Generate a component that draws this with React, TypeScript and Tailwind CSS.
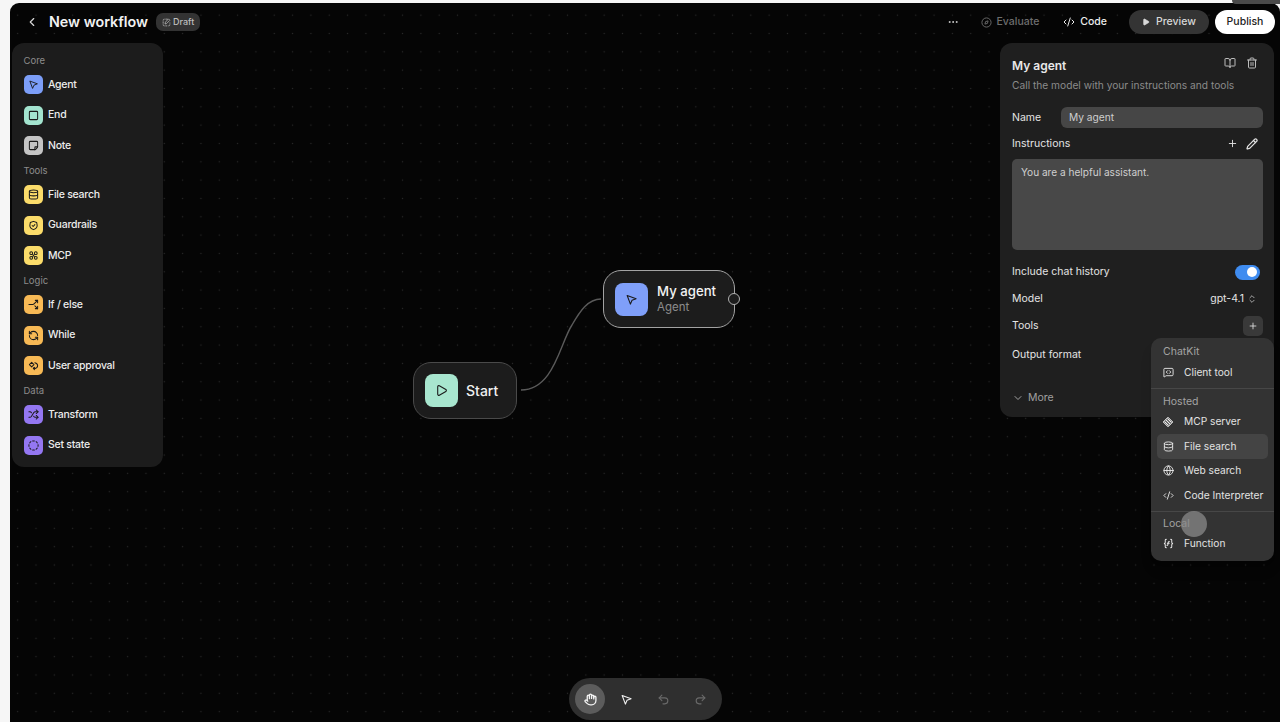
import type { ReactNode } from "react"
import {
  BookOpen,
  ChevronDown,
  ChevronLeft,
  ChevronsUpDown,
  CircleDashed,
  CodeXml,
  Database,
  Ellipsis,
  Globe,
  Hand,
  MessageSquareCode,
  Pencil,
  Play,
  Plus,
  Redo2,
  RefreshCcw,
  Shuffle,
  Split,
  Square,
  StickyNote,
  Trash2,
  Undo2,
} from "lucide-react"

const font = "font-['Inter','Noto_Sans',sans-serif]"

function Cursor({ className }: { className?: string }) {
  return (
    <svg viewBox="0 0 24 24" fill="none" stroke="currentColor" strokeWidth="2" strokeLinejoin="round" className={className}>
      <path d="M4 4.5 20.5 10.5 13 13.5 10 20.5Z" />
    </svg>
  )
}

function ShieldBadge({ className }: { className?: string }) {
  return (
    <svg viewBox="0 0 24 24" fill="none" stroke="currentColor" strokeWidth="2.2" strokeLinecap="round" strokeLinejoin="round" className={className}>
      <path d="M12 3 19 5.5 20 12c0 4-3.5 7.5-8 9-4.5-1.5-8-5-8-9l1-6.5Z" />
      <path d="m9 12 2.2 2.2L15 10" />
    </svg>
  )
}

function McpGlyph({ className }: { className?: string }) {
  return (
    <svg viewBox="0 0 24 24" fill="none" stroke="currentColor" strokeWidth="2.2" className={className}>
      <circle cx="7" cy="7" r="3" />
      <circle cx="17" cy="7" r="3" />
      <circle cx="7" cy="17" r="3" />
      <circle cx="17" cy="17" r="3" />
      <path d="M9.5 9.5l5 5M14.5 9.5l-5 5" />
    </svg>
  )
}

function ApprovalGlyph({ className }: { className?: string }) {
  return (
    <svg viewBox="0 0 24 24" fill="none" stroke="currentColor" strokeWidth="2.2" strokeLinecap="round" strokeLinejoin="round" className={className}>
      <path d="M8 5 13 10 8 15 3 10Z" />
      <path d="M15 6c3.5 1 6 3.500 6 6.500S18 18 15 19l-3-1" />
      <path d="m14 21-2.500-3 3-2" />
    </svg>
  )
}

function McpServerGlyph({ className }: { className?: string }) {
  return (
    <svg viewBox="0 0 24 24" fill="none" stroke="currentColor" strokeWidth="2" strokeLinejoin="round" className={className}>
      <path d="M12 2.500 21.500 12 12 21.500 2.500 12Z" fill="currentColor" fillOpacity="0.35" />
      <path d="M7.500 7.500 16.500 16.500M11 5l8 8M5 11l8 8" />
    </svg>
  )
}

function EvalGlyph({ className }: { className?: string }) {
  return (
    <svg viewBox="0 0 24 24" fill="none" stroke="currentColor" strokeWidth="2" strokeLinejoin="round" className={className}>
      <circle cx="12" cy="12" r="10" />
      <path d="M15.500 8.500 14 14l-5.500 1.500L10 10Z" />
    </svg>
  )
}

function FunctionGlyph({ className }: { className?: string }) {
  return (
    <svg viewBox="0 0 24 24" fill="none" stroke="currentColor" strokeWidth="2.2" strokeLinecap="round" strokeLinejoin="round" className={className}>
      <path d="M7 3C4 3 5 6 5 8.500S3 12 3 12s2 1 2 3.500S4 21 7 21" />
      <path d="M17 3c3 0 2 3 2 5.500s2 3.500 2 3.500-2 1-2 3.500.999 5.500-2 5.500" />
      <path d="M14 8c-2-.5-2.500.5-2.700 2l-.6 4c-.2 1.500-.7 2.500-2.200 2M9.500 11.500h4" />
    </svg>
  )
}

function DraftGlyph({ className }: { className?: string }) {
  return (
    <svg viewBox="0 0 24 24" fill="none" stroke="currentColor" strokeWidth="2" strokeLinecap="round" strokeLinejoin="round" className={className}>
      <path d="M10 3h4M3 10v4M3 6c0-2 1-3 3-3M6 21c-2 0-3-1-3-3M10 21h3M21 13v1M21 18c0 2-1 3-3 3" />
      <path d="M18 3l3 3-9 9-4 1 1-4Z" />
    </svg>
  )
}

function Group({ label, children }: { label: string; children: ReactNode }) {
  return (
    <div>
      <div className="flex h-[18.5px] items-center pt-px text-[9.5px] text-[#8c8c8c]">{label}</div>
      {children}
    </div>
  )
}

function Tool({ color, icon, label }: { color: string; icon: ReactNode; label: string }) {
  return (
    <div className="flex h-[30.5px] items-center gap-[5.5px] text-[10.5px] font-medium tracking-[-0.25px] text-[#ececec]">
      <span className={`flex h-[19px] w-[19px] items-center justify-center rounded-[5px] text-[#1a1a1a] ${color}`}>{icon}</span>
      {label}
    </div>
  )
}

function MenuItem({ icon, label, active }: { icon: ReactNode; label: string; active?: boolean }) {
  return (
    <div className={`mx-[6px] flex h-[24.5px] items-center gap-[10px] rounded-[5px] pl-[5px] text-[10.2px] text-[#e2e2e2] ${active ? "bg-[#444444]" : ""}`}>
      <span className="flex w-[12px] justify-center text-[#e8e8e8]">{icon}</span>
      {label}
    </div>
  )
}

export default function App() {
  const icon = "h-[11px] w-[11px]"
  return (
    <div className={`${font} h-[722px] w-[1280px] overflow-hidden bg-[#f6f6f6] pl-[10px] pt-[3px]`}>
      <div className="relative flex h-[719px] w-[1270px] flex-col rounded-tl-[9px] rounded-tr-[9px] bg-[#050505] bg-[radial-gradient(circle,#2a2a2a_0.7px,transparent_1px)] bg-[position:-1.5px_3px] bg-[size:18.33px_18.33px]">
        <div className="absolute right-0 top-[-3px] h-[4px] w-[48px] rounded-bl-[6px] bg-[#4a4a4a]" />

        {/* Header */}
        <div className="flex h-[38px] shrink-0 items-center justify-between pl-[15px] pr-[5px]">
          <div className="flex items-center">
            <ChevronLeft className="h-[14px] w-[14px] text-[#d8d8d8]" />
            <span className="ml-[10px] text-[14.3px] font-semibold text-[#f2f2f2]">New workflow</span>
            <span className="ml-[8px] flex h-[18px] items-center gap-[2px] rounded-[7px] bg-[#333333] px-[6px] text-[9px] font-medium text-[#bdbdbd]">
              <DraftGlyph className="h-[9px] w-[9px]" />
              Draft
            </span>
          </div>
          <div className="flex items-center">
            <Ellipsis className="h-[12px] w-[12px] text-[#d0d0d0]" />
            <span className="ml-[22px] flex items-center gap-[4px] text-[10.5px] font-medium text-[#6e6e6e]">
              <EvalGlyph className="h-[11px] w-[11px]" />
              Evaluate
            </span>
            <span className="ml-[24px] flex items-center gap-[5px] text-[10.5px] font-medium text-[#ececec]">
              <CodeXml className="h-[12px] w-[12px]" />
              Code
            </span>
            <span className="ml-[22px] flex h-[24px] w-[80px] items-center justify-center gap-[6px] rounded-full bg-[#343434] text-[10.5px] font-medium text-[#d8d8d8]">
              <Play className="h-[8px] w-[8px] fill-current" />
              Preview
            </span>
            <span className="ml-[6px] flex h-[24px] w-[60px] items-center justify-center rounded-full bg-white text-[10.5px] font-medium text-[#222222]">
              Publish
            </span>
          </div>
        </div>

        {/* Panels */}
        <div className="flex items-start justify-between pl-[2px] pr-[6px] pt-[2px]">
          <div className="w-[151px] rounded-[12px] bg-[#1c1c1c] pb-[6px] pl-[11.5px] pt-[8px]">
            <Group label="Core">
              <Tool color="bg-[#7c9ef8]" icon={<Cursor className={icon} />} label="Agent" />
              <Tool color="bg-[#a3e4cf]" icon={<Square className={icon} strokeWidth={2.2} />} label="End" />
              <Tool color="bg-[#c4c4c4]" icon={<StickyNote className={`${icon} rotate-90`} strokeWidth={2.2} />} label="Note" />
            </Group>
            <Group label="Tools">
              <Tool color="bg-[#fbdc6a]" icon={<Database className={icon} strokeWidth={2.2} />} label="File search" />
              <Tool color="bg-[#fbdc6a]" icon={<ShieldBadge className={icon} />} label="Guardrails" />
              <Tool color="bg-[#fbdc6a]" icon={<McpGlyph className={icon} />} label="MCP" />
            </Group>
            <Group label="Logic">
              <Tool color="bg-[#f7b955]" icon={<Split className={`${icon} rotate-90`} strokeWidth={2.2} />} label="If / else" />
              <Tool color="bg-[#f7b955]" icon={<RefreshCcw className={icon} strokeWidth={2.2} />} label="While" />
              <Tool color="bg-[#f7b955]" icon={<ApprovalGlyph className={icon} />} label="User approval" />
            </Group>
            <Group label="Data">
              <Tool color="bg-[#9477f2]" icon={<Shuffle className={icon} strokeWidth={2.2} />} label="Transform" />
              <Tool color="bg-[#9477f2]" icon={<CircleDashed className={icon} strokeWidth={2.2} />} label="Set state" />
            </Group>
          </div>

          <div className="relative h-[374px] w-[274px] rounded-[12px] bg-[#1f1f1f] pl-[12px] pr-[11px] pt-[14px] text-[10.5px] text-[#e4e4e4]">
            <div className="flex items-start justify-between pr-[5px]">
              <span className="mt-px text-[12px] font-semibold leading-[16px] text-[#e8e8e8]">My agent</span>
              <div className="flex gap-[10.5px] text-[#bdbdbd]">
                <BookOpen className="h-[12px] w-[12px]" />
                <Trash2 className="h-[12px] w-[12px]" />
              </div>
            </div>
            <div className="mt-[3px] text-[10.2px] leading-[16px] text-[#8b8b8b]">Call the model with your instructions and tools</div>
            <div className="mt-[14px] flex h-[21px] items-center">
              <span className="w-[49px]">Name</span>
              <div className="flex h-[21px] flex-1 items-center rounded-[6px] bg-[#464646] pl-[8px] text-[10.2px] text-[#cfcfcf]">My agent</div>
            </div>
            <div className="mt-[5px] flex h-[21px] items-center justify-between pr-[5px]">
              <span>Instructions</span>
              <div className="flex items-center gap-[8.5px] text-[#e4e4e4]">
                <Plus className="h-[11px] w-[11px]" />
                <Pencil className="h-[12px] w-[12px]" strokeWidth={2.5} />
              </div>
            </div>
            <div className="mt-[5px] h-[91px] rounded-[5px] bg-[#484848] pl-[9px] pt-[6px] text-[10.1px] leading-[15px] text-[#cfcfcf]">You are a helpful assistant.</div>
            <div className="mt-[12px] flex h-[20px] items-center justify-between pr-[3px]">
              <span>Include chat history</span>
              <span className="flex h-[15px] w-[25px] items-center justify-end rounded-full bg-[#3f8cf0] pr-[3px]">
                <span className="h-[10px] w-[10px] rounded-full bg-white" />
              </span>
            </div>
            <div className="mt-[7px] flex h-[20px] items-center justify-between pr-[6px]">
              <span>Model</span>
              <span className="flex items-center gap-[3px]">
                gpt-4.1
                <ChevronsUpDown className="h-[10px] w-[10px] text-[#bdbdbd]" />
              </span>
            </div>
            <div className="mt-[7px] flex h-[20px] items-center justify-between">
              <span>Tools</span>
              <span className="flex h-[20px] w-[20px] items-center justify-center rounded-[5px] bg-[#393939]">
                <Plus className="h-[10px] w-[10px]" />
              </span>
            </div>
            <div className="mt-[9px] flex h-[20px] items-center">Output format</div>
            <div className="mt-[23px] flex h-[20px] items-center gap-[4px] text-[#a0a0a0]">
              <ChevronDown className="h-[12px] w-[12px]" />
              More
            </div>

            {/* Tools dropdown */}
            <div className="absolute left-[151px] top-[295px] h-[223px] w-[123px] rounded-[10px] bg-[#333333] pt-[6px] shadow-lg">
              <div className="flex h-[15px] items-center pl-[12px] text-[10.5px] text-[#a3a3a3]">ChatKit</div>
              <div className="mt-px" />
              <MenuItem icon={<MessageSquareCode className="h-[11px] w-[11px]" />} label="Client tool" />
              <div className="mb-[6px] mt-[3px] h-px bg-[#474747]" />
              <div className="flex h-[15px] items-center pl-[12px] text-[10.5px] text-[#a3a3a3]">Hosted</div>
              <MenuItem icon={<McpServerGlyph className="h-[12px] w-[12px]" />} label="MCP server" />
              <MenuItem active icon={<Database className="h-[11px] w-[11px]" />} label="File search" />
              <MenuItem icon={<Globe className="h-[11px] w-[11px]" />} label="Web search" />
              <MenuItem icon={<CodeXml className="h-[11px] w-[11px]" />} label="Code Interpreter" />
              <div className="mb-[5px] mt-[3px] h-px bg-[#474747]" />
              <div className="flex h-[15px] items-center pl-[12px] text-[10.5px] text-[#a3a3a3]">Local</div>
              <MenuItem icon={<FunctionGlyph className="h-[11px] w-[11px]" />} label="Function" />
            </div>
            {/* Click indicator */}
            <div className="absolute left-[181px] top-[468px] h-[26px] w-[26px] rounded-full bg-[#8a8a8a]/75" />
          </div>
        </div>

        {/* Edge between nodes */}
        <svg className="absolute left-[510px] top-[290px] h-[110px] w-[90px]" viewBox="0 0 90 110" fill="none">
          <path d="M1 97C34 97 40 50 52 32 60 18 68 6 81 6" stroke="#5a5a5a" strokeWidth="1.4" />
        </svg>

        {/* Start node */}
        <div className="absolute left-[403px] top-[359px] flex h-[57px] w-[104px] items-center gap-[8px] rounded-[18px] border border-[#4a4a4a] bg-[#1c1c1c] pl-[11px]">
          <span className="flex h-[33px] w-[33px] items-center justify-center rounded-[8px] bg-[#a8e6cf] text-[#1a1a1a]">
            <Play className="h-[13px] w-[13px]" />
          </span>
          <span className="text-[14px] font-medium text-[#f0f0f0]">Start</span>
        </div>

        {/* Agent node */}
        <div className="absolute left-[593px] top-[267px] flex h-[58px] w-[132px] items-center gap-[9px] rounded-[18px] border border-[#a3a3a3] bg-[#1c1c1c] pl-[11px]">
          <span className="flex h-[33px] w-[33px] items-center justify-center rounded-[8px] bg-[#7f9ff9] text-[#1a1a1a]">
            <Cursor className="h-[13px] w-[13px]" />
          </span>
          <div>
            <div className="text-[13.2px] font-medium leading-[17px] text-[#f2f2f2]">My agent</div>
            <div className="text-[11.5px] leading-[15px] text-[#8c8c8c]">Agent</div>
          </div>
          <span className="absolute right-[-6px] top-[22px] h-[12px] w-[12px] rounded-full border-[1.5px] border-[#b0b0b0] bg-[#1c1c1c]" />
        </div>

        {/* Canvas toolbar */}
        <div className="absolute left-[559px] top-[675px] flex h-[42px] w-[153px] items-center rounded-full bg-[#2f2f2f] pl-[6px]">
          <span className="flex h-[30px] w-[30px] items-center justify-center rounded-full bg-[#5c5c5c] text-[#f4f4f4]">
            <Hand className="h-[13px] w-[13px]" strokeWidth={2.4} />
          </span>
          <span className="ml-[15px] text-[#f2f2f2]">
            <Cursor className="h-[13px] w-[13px]" />
          </span>
          <span className="ml-[24px] text-[#6a6a6a]">
            <Undo2 className="h-[13px] w-[13px]" />
          </span>
          <span className="ml-[24px] text-[#6a6a6a]">
            <Redo2 className="h-[13px] w-[13px]" />
          </span>
        </div>
      </div>
    </div>
  )
}
